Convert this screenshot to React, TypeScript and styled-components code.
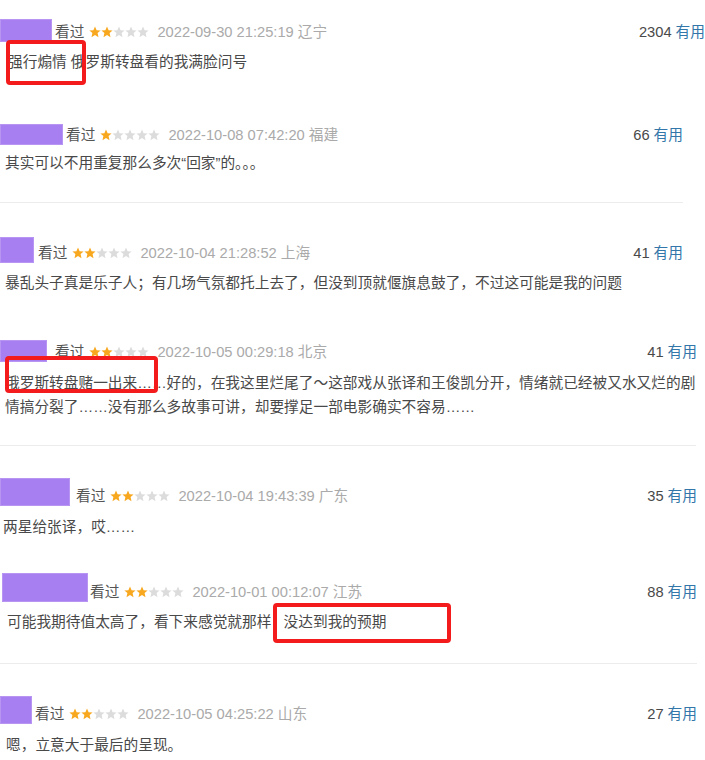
import React from "react";
import styled, { createGlobalStyle } from "styled-components";

const Global = createGlobalStyle`
  html, body { margin: 0; padding: 0; background: #fff; }
  body {
    font-family: "Liberation Sans", "Noto Sans CJK SC", Arial, sans-serif;
    font-size: 14.7px;
    color: #494949;
  }
`;

const Page = styled.div`
  width: 705px;
  height: 760px;
  overflow: hidden;
  display: flex;
  flex-direction: column;
`;

const Item = styled.div<{ $pt: number; $w: number }>`
  position: relative;
  padding-top: ${(p) => p.$pt}px;
  width: ${(p) => p.$w}px;
`;

const Header = styled.div`
  display: flex;
  align-items: flex-end;
  line-height: 20px;
  white-space: nowrap;
`;

const Avatar = styled.div<{ $w: number; $h: number; $ml: number }>`
  width: ${(p) => p.$w}px;
  height: ${(p) => p.$h}px;
  margin-left: ${(p) => p.$ml}px;
  background: #a87ff0;
  box-shadow: inset 0 0 0 1px #b894f3;
  flex: none;
`;

const Watched = styled.span<{ $gap: number }>`
  margin-left: ${(p) => p.$gap}px;
  color: #555;
`;

const Stars = styled.span`
  display: inline-flex;
  margin-left: 5px;
  margin-bottom: 4px;
`;

const DateText = styled.span`
  margin-left: 8px;
  color: #aaa;
`;

const Useful = styled.span`
  margin-left: auto;
  color: #494949;
`;

const UsefulLink = styled.span`
  color: #3377aa;
  margin-left: 4px;
`;

const Body = styled.div<{ $mt: number; $ml: number }>`
  margin-top: ${(p) => p.$mt}px;
  margin-left: ${(p) => p.$ml}px;
  line-height: 24px;
  color: #494949;
  white-space: pre;
`;

const Divider = styled.div<{ $mt: number; $w: number }>`
  margin-top: ${(p) => p.$mt}px;
  width: ${(p) => p.$w}px;
  height: 1px;
  background: #ececec;
  flex: none;
`;

const Mark = styled.div<{ $x: number; $y: number; $w: number; $h: number }>`
  position: absolute;
  left: ${(p) => p.$x}px;
  top: ${(p) => p.$y}px;
  width: ${(p) => p.$w}px;
  height: ${(p) => p.$h}px;
  box-sizing: border-box;
  border: 4px solid #f31b1b;
  border-radius: 4px;
`;

const Star = ({ on }: { on: boolean }) => (
  <svg width="12" height="12" viewBox="0 0 12 12">
    <polygon
      points="6,0.6 7.6,4.2 11.6,4.5 8.6,7.1 9.5,11.2 6,9 2.5,11.2 3.4,7.1 0.4,4.5 4.4,4.2"
      fill={on ? "#f8a81f" : "#dcdcdc"}
    />
  </svg>
);

type Review = {
  pt: number;
  w: number;
  av: [number, number, number];
  gap: number;
  stars: number;
  date: string;
  count: string;
  bodyMt: number;
  bodyMl: number;
  text: React.ReactNode;
  marks?: { x: number; y: number; w: number; h: number }[];
};

const ReviewItem = ({ r }: { r: Review }) => (
  <Item $pt={r.pt} $w={r.w}>
    <Header>
      <Avatar $w={r.av[0]} $h={r.av[1]} $ml={r.av[2]} />
      <Watched $gap={r.gap}>看过</Watched>
      <Stars>
        {[0, 1, 2, 3, 4].map((i) => (
          <Star key={i} on={i < r.stars} />
        ))}
      </Stars>
      <DateText>{r.date}</DateText>
      <Useful>
        {r.count}
        <UsefulLink>有用</UsefulLink>
      </Useful>
    </Header>
    <Body $mt={r.bodyMt} $ml={r.bodyMl}>
      {r.text}
    </Body>
    {r.marks?.map((m, i) => (
      <Mark key={i} $x={m.x} $y={m.y} $w={m.w} $h={m.h} />
    ))}
  </Item>
);

const r1: Review = {
  pt: 19, w: 705, av: [52, 23, 0], gap: 3, stars: 2,
  date: "2022-09-30 21:25:19 辽宁", count: "2304",
  bodyMt: 8, bodyMl: 8, text: "强行煽情 俄罗斯转盘看的我满脸问号",
  marks: [{ x: 6, y: 40, w: 80, h: 45 }],
};
const r2: Review = {
  pt: 50, w: 683, av: [63, 21, 0], gap: 3, stars: 1,
  date: "2022-10-08 07:42:20 福建", count: "66",
  bodyMt: 6, bodyMl: 5, text: "其实可以不用重复那么多次“回家”的。。。",
};
const r3: Review = {
  pt: 34, w: 683, av: [34, 26, 0], gap: 4, stars: 2,
  date: "2022-10-04 21:28:52 上海", count: "41",
  bodyMt: 8, bodyMl: 5,
  text: "暴乱头子真是乐子人；有几场气氛都托上去了，但没到顶就偃旗息鼓了，不过这可能是我的问题",
};
const r4: Review = {
  pt: 45, w: 697, av: [47, 22, 0], gap: 8, stars: 2,
  date: "2022-10-05 00:29:18 北京", count: "41",
  bodyMt: 9, bodyMl: 5,
  text: (
    <>
      俄罗斯转盘赌一出来……好的，在我这里烂尾了～这部戏从张译和王俊凯分开，情绪就已经被又水又烂的剧
      <br />
      情搞分裂了……没有那么多故事可讲，却要撑足一部电影确实不容易……
    </>
  ),
  marks: [{ x: 5, y: 61, w: 153, h: 37 }],
};
const r5: Review = {
  pt: 32, w: 697, av: [70, 28, 0], gap: 6, stars: 2,
  date: "2022-10-04 19:43:39 广东", count: "35",
  bodyMt: 9, bodyMl: 3, text: "两星给张译，哎……",
};
const r6: Review = {
  pt: 34, w: 697, av: [86, 29, 2], gap: 2, stars: 2,
  date: "2022-10-01 00:12:07 江苏", count: "88",
  bodyMt: 8, bodyMl: 7, text: "可能我期待值太高了，看下来感觉就那样   没达到我的预期",
  marks: [{ x: 273, y: 64, w: 178, h: 40 }],
};
const r7: Review = {
  pt: 32, w: 697, av: [32, 28, 0], gap: 3, stars: 2,
  date: "2022-10-05 04:25:22 山东", count: "27",
  bodyMt: 9, bodyMl: 6, text: "嗯，立意大于最后的呈现。",
};

export default function App() {
  return (
    <>
      <Global />
      <Page>
        <ReviewItem r={r1} />
        <ReviewItem r={r2} />
        <Divider $mt={27} $w={683} />
        <ReviewItem r={r3} />
        <ReviewItem r={r4} />
        <Divider $mt={26} $w={696} />
        <ReviewItem r={r5} />
        <ReviewItem r={r6} />
        <Divider $mt={29} $w={697} />
        <ReviewItem r={r7} />
      </Page>
    </>
  );
}
